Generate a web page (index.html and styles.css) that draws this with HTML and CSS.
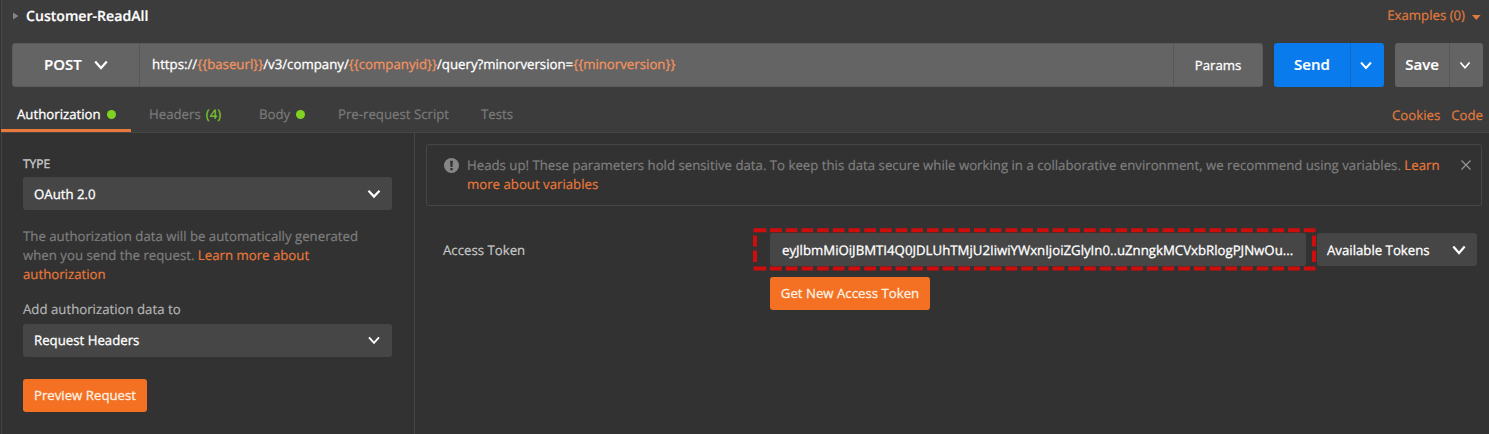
FILE: index.html
```html
<!DOCTYPE html>
<html lang="en">
<head>
<meta charset="utf-8">
<title>Customer-ReadAll</title>
<link rel="stylesheet" href="styles.css">
</head>
<body>
<div class="app">
  <header class="title-row">
    <svg class="caret-right" width="6" height="8" viewBox="0 0 6 8"><path d="M0 0.5L5.5 4L0 7.5Z"/></svg>
    <h1 class="title"><span>Customer-ReadAll</span></h1>
    <a class="examples"><span>Examples (0)</span><svg width="9" height="5" viewBox="0 0 9 5"><path d="M0 0H8.6L4.3 5Z"/></svg></a>
  </header>

  <div class="request-row">
    <div class="url-bar">
      <button class="method"><span>POST</span><svg width="14" height="10" viewBox="0 0 14 10"><path d="M1.2 1.5L7 8L12.8 1.5"/></svg></button>
      <div class="url"><span>https://<b>{{baseurl}}</b>/v3/company/<b>{{companyid}}</b>/query?minorversion=<b>{{minorversion}}</b></span></div>
      <button class="params"><span>Params</span></button>
    </div>
    <div class="split send">
      <button class="split-main"><span>Send</span></button>
      <button class="split-arrow"><svg width="12" height="9" viewBox="0 0 12 9"><path d="M1 1.5L6 7L11 1.5"/></svg></button>
    </div>
    <div class="split save">
      <button class="split-main"><span>Save</span></button>
      <button class="split-arrow"><svg width="12" height="9" viewBox="0 0 12 9"><path d="M1.4 1.5L6 6.8L10.6 1.5"/></svg></button>
    </div>
  </div>

  <nav class="tabs">
    <a class="tab tab-auth active"><span>Authorization</span><i class="dot"></i></a>
    <a class="tab tab-headers"><span>Headers</span><span class="count">(4)</span></a>
    <a class="tab tab-body"><span>Body</span><i class="dot"></i></a>
    <a class="tab tab-pre"><span>Pre-request Script</span></a>
    <a class="tab tab-tests"><span>Tests</span></a>
    <div class="tab-links"><a>Cookies</a><a>Code</a></div>
  </nav>

  <div class="content">
    <aside class="sidebar">
      <div class="type-label"><span>TYPE</span></div>
      <div class="select"><span>OAuth 2.0</span><svg width="14" height="10" viewBox="0 0 14 10"><path d="M1.5 1.7L7 7.6L12.5 1.7"/></svg></div>
      <p class="help">The authorization data will be automatically generated<br>when you send the request. <a>Learn more about<br>authorization</a></p>
      <div class="add-label"><span>Add authorization data to</span></div>
      <div class="select thin"><span>Request Headers</span><svg width="14" height="10" viewBox="0 0 14 10"><path d="M2 1.4L7 6.8L12 1.4"/></svg></div>
      <button class="primary preview"><span>Preview Request</span></button>
    </aside>

    <main class="main">
      <div class="notice">
        <svg class="info" width="15" height="15" viewBox="0 0 15 15"><circle cx="7.5" cy="7.5" r="7.5"/><path d="M6.1 2.8H8.9L8.5 8.9H6.5ZM6.3 10H8.7V12.3H6.3Z"/></svg>
        <p class="notice-text">Heads up! These parameters hold sensitive data. To keep this data secure while working in a collaborative environment, we recommend using variables. <a>Learn<br>more about variables</a></p>
        <svg class="close" width="10" height="10" viewBox="0 0 10 10"><path d="M0.5 0.5L9.5 9.5M9.5 0.5L0.5 9.5"/></svg>
      </div>
      <div class="token-row">
        <div class="token-label"><span>Access Token</span></div>
        <div class="token-field">
          <div class="token-input"><span>eyJlbmMiOiJBMTI4Q0JDLUhTMjU2IiwiYWxnIjoiZGlyIn0..uZnngkMCVxbRlogPJNwOu...</span></div>
          <svg class="highlight" width="563" height="43" viewBox="0 0 563 43">
            <path class="corners" d="M0.5 2.3H13.3M0.5 40.5H13.3"/>
            <path class="dashes" d="M17 2.3H563M17 40.5H563"/>
            <path class="sides" d="M2 7.5V18.5M2 22.5V34M561 7.5V18.5M561 22.5V34"/>
          </svg>
        </div>
        <div class="select available"><span>Available Tokens</span><svg width="14" height="10" viewBox="0 0 14 10"><path d="M1.3 1.5L7 8L12.7 1.5"/></svg></div>
      </div>
      <button class="primary get-token"><span>Get New Access Token</span></button>
    </main>
  </div>
</div>
</body>
</html>
```
FILE: styles.css
```css
* { box-sizing: border-box; }
body { margin: 0; background: #3c3c3c; overflow: hidden; }
button { border: 0; padding: 0; margin: 0; background: none; font: inherit; color: inherit; }
svg { flex: none; display: block; }
span { white-space: nowrap; }

.app {
  width: 1489px; height: 434px;
  display: flex; flex-direction: column;
  border-left: 1px solid #323232;
  box-shadow: inset 1px 0 #4a4a4a;
  font: 400 13.22px/19px "Open Sans", sans-serif;
  text-rendering: geometricPrecision;
  -webkit-text-stroke: 0.2px;
  color: #fff;
}

.title-row { height: 43px; display: flex; align-items: flex-start; padding: 6px 8px 0 12px; }
.caret-right { margin-top: 6px; fill: #848484; }
.title { margin: 1px 0 0 7px; font-size: 14.1px; line-height: 20px; font-weight: 600; }
.examples { margin-left: auto; display: flex; align-items: center; gap: 7px; color: #e07b3c; }
.examples svg { fill: #e07b3c; margin-top: 3px; }

.request-row { height: 44px; display: flex; padding-left: 11px; }
.url-bar { width: 1251px; display: flex; background: #646464; border: 1px solid #5b5b5b; border-radius: 3px; }
.method { width: 127px; display: flex; align-items: center; border-right: 1px solid #575757; padding: 0 0 1px 31px; font-size: 15px; font-weight: 600; }
.method svg { margin-left: 12px; }
.method path, .split-arrow path, .select path { fill: none; stroke: #fff; stroke-width: 2.2; }
.url { flex: 1; display: flex; align-items: center; padding: 0 0 1px 12px; font-size: 13.25px; -webkit-text-stroke-width: 0.3px; }
.url b { font-weight: 400; color: #f0925f; }
.params { width: 89px; border-left: 1px solid #575757; -webkit-text-stroke-width: 0.3px; }
.split { display: flex; border-radius: 3px; overflow: hidden; font-size: 15px; font-weight: 600; }
.split-main { padding-bottom: 1px; }
.split-arrow { display: flex; align-items: center; justify-content: center; }
.split-arrow path { stroke-width: 1.9; }
.send { width: 110px; margin-left: 11px; background: #097bed; }
.send .split-main { flex: 1; }
.send .split-arrow { width: 34px; border-left: 1px solid #0a6bcd; padding-right: 3px; }
.save { width: 88px; margin-left: 11px; background: #646464; }
.save .split-main { flex: 1; }
.save .split-arrow { width: 34px; border-left: 1px solid #575757; padding-right: 3px; }
.save path { stroke-width: 1.7; }

.tabs { height: 46px; display: flex; border-bottom: 1px solid #464646; color: #7b7b7b; }
.tab { display: flex; align-items: center; height: 45px; gap: 6px; padding-top: 12px; border-bottom: 3px solid transparent; }
.tab.active { color: #fff; border-bottom-color: #e9783a; -webkit-text-stroke-width: 0.3px; }
.tab-auth { width: 130px; padding-left: 16px; }
.tab-headers { width: 110px; padding-left: 18px; }
.tab-body { width: 79px; padding-left: 18px; }
.tab-pre { width: 143px; padding-left: 18px; }
.tab-tests { padding-left: 18px; }
.count { color: #7cc92f; }
.tab-headers { gap: 5px; }
.dot { width: 9px; height: 9px; border-radius: 50%; background: #7fd220; margin-top: 1px; }
.tab-links { margin-left: auto; display: flex; gap: 11px; padding: 19px 6px 0 0; color: #e07b3c; }

.content { flex: 1; display: flex; background: #323232; box-shadow: inset 1px 0 #444; }
.sidebar { width: 414px; padding-left: 22px; border-right: 1px solid #464646; }
.type-label { height: 44px; padding-top: 21px; font-size: 12px; color: #c6c6c6; -webkit-text-stroke-width: 0.4px; }
.select { width: 369px; height: 33px; display: flex; align-items: center; justify-content: space-between; background: #464646; border-radius: 3px; padding: 0 11px; -webkit-text-stroke-width: 0.3px; }
.select span, .token-input span { padding-top: 1px; }
.help { margin: 17px 0 0; height: 73px; color: #7f7f7f; white-space: nowrap; }
.help a, .notice a { color: #e8783a; }
.add-label { height: 24px; color: #b4b4b4; }
.select.thin span { padding: 0 0 1px; }
.select.thin path { stroke-width: 1.9; }
.primary { display: block; height: 33px; border-radius: 3px; background: #f47023; color: #fff1e2; -webkit-text-stroke-width: 0.3px; }
.preview { width: 124px; margin-top: 22px; }

.main { flex: 1; padding: 11px 7px 0 11px; }
.notice { height: 62px; display: flex; border: 1px solid #464646; border-radius: 3px; padding: 11px 10px 0 17px; }
.info { margin-top: 2px; fill: #868686; }
.info path { fill: #323232; }
.notice-text { margin: 0 0 0 8px; color: #7f7f7f; white-space: nowrap; }
.close { margin: 4px 0 0 auto; }
.close path { stroke: #999; stroke-width: 1.1; }
.token-row { display: flex; align-items: center; margin-top: 27px; height: 33px; padding-left: 17px; }
.token-label { width: 327px; padding-top: 1px; color: #c6c6c6; }
.token-field { position: relative; }
.token-input { width: 536px; height: 33px; display: flex; align-items: center; padding-left: 12px; background: #464646; border-radius: 3px; -webkit-text-stroke-width: 0.3px; }
.highlight { position: absolute; left: -17px; top: -5px; }
.highlight path { fill: none; stroke: #d00d0d; stroke-width: 4; }
.highlight .dashes { stroke-dasharray: 11.7 4; }
.select.available { width: 160px; margin-left: 11px; padding-left: 10px; }
.get-token { width: 160px; margin: 11px 0 0 344px; }
```
